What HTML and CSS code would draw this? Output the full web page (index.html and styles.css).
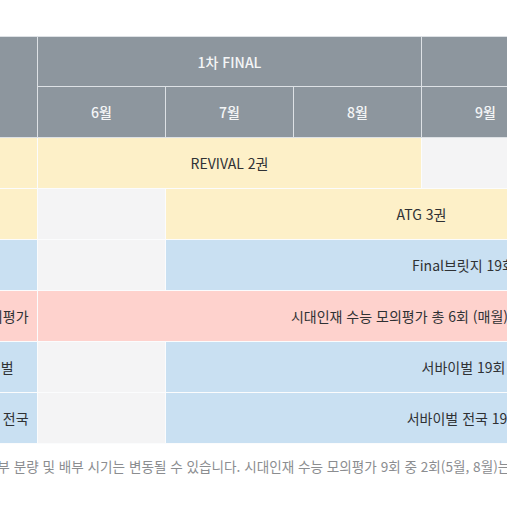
FILE: index.html
```html
<!DOCTYPE html>
<html lang="ko">
<head>
<meta charset="utf-8">
<title>FINAL 배부 일정</title>
<link rel="stylesheet" href="styles.css">
</head>
<body>
<div class="page">
  <div class="scroller">
    <table class="plan">
      <colgroup>
        <col class="c-label">
        <col class="c-month"><col class="c-month"><col class="c-month"><col class="c-month"><col class="c-month">
        <col class="c-last">
      </colgroup>
      <thead>
        <tr class="h1">
          <th rowspan="2"></th>
          <th colspan="3">1차 FINAL</th>
          <th colspan="3">2차 FINAL</th>
        </tr>
        <tr class="h2">
          <th>6월</th><th>7월</th><th>8월</th><th>9월</th><th>10월</th><th>11월</th>
        </tr>
      </thead>
      <tbody>
        <tr>
          <td class="yellow"></td>
          <td class="yellow" colspan="3">REVIVAL 2권</td>
          <td class="empty"></td><td class="empty"></td><td class="empty"></td>
        </tr>
        <tr>
          <td class="yellow"></td>
          <td class="empty"></td>
          <td class="yellow" colspan="4">ATG 3권</td>
          <td class="empty"></td>
        </tr>
        <tr>
          <td class="blue"></td>
          <td class="empty"></td>
          <td class="blue" colspan="5">Final브릿지 19회</td>
        </tr>
        <tr>
          <td class="pink">수능 모의평가</td>
          <td class="pink" colspan="6">시대인재 수능 모의평가 총 6회 (매월)</td>
        </tr>
        <tr>
          <td class="blue">서바이벌</td>
          <td class="empty"></td>
          <td class="blue" colspan="5">서바이벌 19회</td>
        </tr>
        <tr>
          <td class="blue">서바이벌 전국</td>
          <td class="empty"></td>
          <td class="blue" colspan="5">서바이벌 전국 19회</td>
        </tr>
      </tbody>
    </table>
  </div>
  <p class="note">교재 배부 분량 및 배부 시기는 변동될 수 있습니다. 시대인재 수능 모의평가 9회 중 2회(5월, 8월)는 별도로 진행됩니다.</p>
</div>
</body>
</html>
```
FILE: styles.css
```css
html, body {
  margin: 0;
  padding: 0;
  background: #ffffff;
}

body {
  font-family: "Noto Sans CJK KR", "Noto Sans", sans-serif;
}

.page {
  width: 507px;
  height: 507px;
  overflow: hidden;
  padding-top: 36px;
  box-sizing: border-box;
}

.scroller {
  width: 507px;
  overflow: hidden;
}

.plan {
  border-collapse: collapse;
  table-layout: fixed;
  width: 823px;
  margin-left: -62px;
}

.c-label { width: 99px; }
.c-month { width: 128px; }
.c-last { width: 84px; }

.plan th {
  background: #8d969e;
  color: #f4f5f6;
  font-size: 14px;
  font-weight: 500;
  border: 1px solid #dde1e5;
  padding: 0;
  text-align: center;
}

.plan .h1 th { height: 49px; }
.plan .h2 th { height: 50px; }

.plan td {
  height: 50px;
  padding: 0;
  text-align: center;
  font-size: 14px;
  color: #2f3134;
  border: 1px solid #fbfcfd;
  white-space: nowrap;
  overflow: hidden;
}

.yellow { background: #fdf0c8; }
.blue { background: #c9e0f2; }
.pink { background: #fed2cd; }
.empty { background: #f4f4f5; }

.note {
  margin: 12px 0 0 -44px;
  white-space: nowrap;
  font-size: 13.6px;
  color: #8b8d90;
  line-height: 20px;
}
```
